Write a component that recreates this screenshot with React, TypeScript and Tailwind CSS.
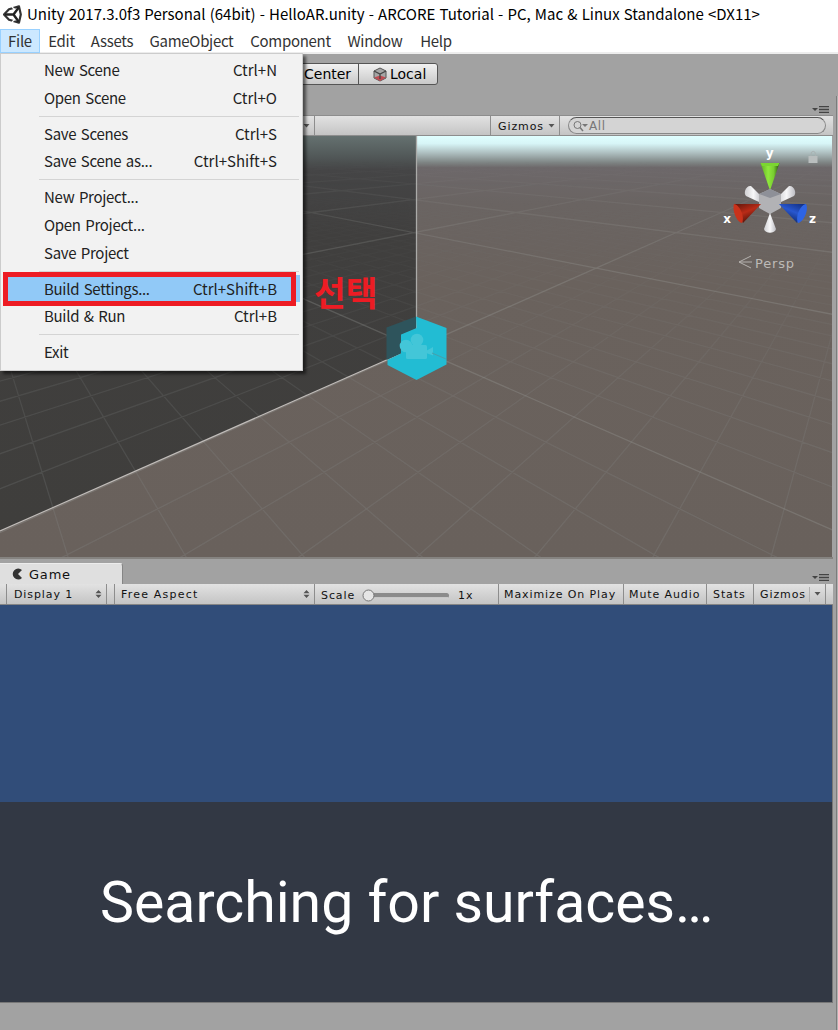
import React from "react";

const MENUS = [
  { label: "File", box: "w-10" },
  { label: "Edit", box: "w-[43px]" },
  { label: "Assets", box: "w-[58px]" },
  { label: "GameObject", box: "w-[101px]" },
  { label: "Component", box: "w-[97px]" },
  { label: "Window", box: "w-[72px]" },
  { label: "Help", box: "w-[50px]" },
];

const GROUPS: [string, string][][] = [
  [["New Scene", "Ctrl+N"], ["Open Scene", "Ctrl+O"]],
  [["Save Scenes", "Ctrl+S"], ["Save Scene as...", "Ctrl+Shift+S"]],
  [["New Project...", ""], ["Open Project...", ""], ["Save Project", ""]],
  [["Build Settings...", "Ctrl+Shift+B"], ["Build & Run", "Ctrl+B"]],
  [["Exit", ""]],
];

const BAR = "bg-linear-to-b from-[#e2e2e2] to-[#c4c4c4]";
const CELL = "flex h-full items-center border-r border-[#8d8d8d] whitespace-nowrap";

function UnityLogo() {
  return (
    <svg className="ml-[3px] h-[19px] w-[19px]" viewBox="0 0 19 19" fill="none">
      <path d="M1 9.5 6 4.2 16 1.4 17.8 9.5 16 17.6 6 14.8Z" stroke="#333" strokeWidth="2.2" strokeLinejoin="round" />
      <path d="M2 9.5H10.5L15.7 2.5M10.5 9.5 15.7 16.8" stroke="#222" strokeWidth="2.4" />
      <path d="M9 2.2 12 4.5M9 16.8 12 14.4" stroke="#fff" strokeWidth="1.3" />
    </svg>
  );
}

function PanelMenu() {
  return (
    <svg className="h-[7px] w-[18px]" viewBox="0 0 18 7">
      <path d="M1 2H7L4 5Z" fill="#444" />
      <path d="M8 .7H18M8 3.5H18M8 6.3H18" stroke="#444" strokeWidth="1.3" />
    </svg>
  );
}

function Caret() {
  return (
    <svg className="h-[4px] w-[7px]" viewBox="0 0 7 4">
      <path d="M.5 0H6.5L3.5 3.6Z" fill="#555" />
    </svg>
  );
}

function UpDown() {
  return (
    <svg className="h-2 w-[7px]" viewBox="0 0 7 8">
      <path d="M.5 3.2H6.5L3.5 0ZM.5 4.8H6.5L3.5 8Z" fill="#555" />
    </svg>
  );
}

function project(k: number, j: number): [number, number] {
  const w = 0.0623;
  const d = 1 - (k + j) * w;
  return [
    (416 + 60 * k * w - 885 * j * w) / d,
    (348 - 140 * (k + j) * w) / d - 136,
  ];
}

function gridPath(major: boolean): string {
  let out = "";
  for (let n = -90; n <= 15; n++) {
    if ((n % 10 === 0) !== major) continue;
    const near = 15.4 - n;
    for (const flip of [false, true]) {
      const a = flip ? project(n, -400) : project(-400, n);
      const b = flip ? project(n, near) : project(near, n);
      out += `M${a[0].toFixed(1)} ${a[1].toFixed(1)}L${b[0].toFixed(1)} ${b[1].toFixed(1)}`;
    }
  }
  return out;
}

function SceneView() {
  return (
    <svg className="block h-[421px] w-[832px]" viewBox="0 0 832 421">
      <defs>
        <linearGradient id="sky" x1="0" y1="0" x2="0" y2="421" gradientUnits="userSpaceOnUse">
          <stop offset="0" stopColor="#e0ffff" />
          <stop offset=".018" stopColor="#d7f5f7" />
          <stop offset=".04" stopColor="#aebfc0" />
          <stop offset=".062" stopColor="#808786" />
          <stop offset=".075" stopColor="#6d686a" />
          <stop offset=".16" stopColor="#6a6462" />
          <stop offset=".35" stopColor="#6a625d" />
          <stop offset="1" stopColor="#69615c" />
        </linearGradient>
        <linearGradient id="shade" x1="0" y1="0" x2="0" y2="395" gradientUnits="userSpaceOnUse">
          <stop offset="0" stopColor="#657170" />
          <stop offset=".05" stopColor="#525959" />
          <stop offset=".085" stopColor="#454546" />
          <stop offset=".25" stopColor="#403f3e" />
          <stop offset="1" stopColor="#3f3e3c" />
        </linearGradient>
        <linearGradient id="minor" x1="0" y1="0" x2="0" y2="421" gradientUnits="userSpaceOnUse">
          <stop offset=".1" stopColor="#fff" stopOpacity="0" />
          <stop offset=".3" stopColor="#fff" stopOpacity=".2" />
          <stop offset=".6" stopColor="#fff" stopOpacity=".75" />
          <stop offset="1" stopColor="#fff" />
        </linearGradient>
        <linearGradient id="major" x1="0" y1="0" x2="0" y2="421" gradientUnits="userSpaceOnUse">
          <stop offset=".06" stopColor="#fff" stopOpacity="0" />
          <stop offset=".2" stopColor="#fff" stopOpacity=".6" />
          <stop offset=".35" stopColor="#fff" />
        </linearGradient>
        <mask id="minorFade" maskUnits="userSpaceOnUse" x="0" y="0" width="832" height="421">
          <rect width="832" height="421" fill="url(#minor)" />
        </mask>
        <mask id="majorFade" maskUnits="userSpaceOnUse" x="0" y="0" width="832" height="421">
          <rect width="832" height="421" fill="url(#major)" />
        </mask>
        <linearGradient id="green" x1="0" x2="1">
          <stop offset="0" stopColor="#5fae22" />
          <stop offset=".4" stopColor="#8fe83c" />
          <stop offset=".7" stopColor="#78cc30" />
          <stop offset="1" stopColor="#234c0c" />
        </linearGradient>
        <linearGradient id="red" x1="0" y1="0" x2=".6" y2="1">
          <stop offset="0" stopColor="#5d150a" />
          <stop offset=".5" stopColor="#b92b17" />
          <stop offset="1" stopColor="#3d1009" />
        </linearGradient>
        <linearGradient id="blue" x1="1" y1="0" x2=".4" y2="1">
          <stop offset="0" stopColor="#102a78" />
          <stop offset=".5" stopColor="#2857cf" />
          <stop offset="1" stopColor="#0e2560" />
        </linearGradient>
        <linearGradient id="white" x1="0" x2="1">
          <stop offset="0" stopColor="#cfcfd2" />
          <stop offset=".5" stopColor="#f7f7f8" />
          <stop offset="1" stopColor="#bcbcc2" />
        </linearGradient>
      </defs>
      <rect width="832" height="421" fill="url(#sky)" />
      <path d="M0 0H416V211L0 395Z" fill="url(#shade)" />
      <path d={gridPath(false)} mask="url(#minorFade)" stroke="#8b9190" strokeOpacity=".22" strokeWidth="1.3" fill="none" />
      <path d={gridPath(true)} mask="url(#majorFade)" stroke="#a2a4a2" strokeOpacity=".28" strokeWidth="1.3" fill="none" />
      <path d="M416.500 0V211" stroke="#aaaaa8" strokeWidth="1.300" />
      <path d="M0 395 416 211" stroke="#c0bcb9" strokeWidth="1.200" />

      <path d="M386.500 191.500 416 180.500V192L401 198.500V217.500L386.500 224Z" fill="#2e545c" />
      <path d="M416 180.500 446.500 192V228.500L416.500 244 387.500 229V224L401 217.500V198.500L416.500 192Z" fill="#22bcd3" />
      <g fill="#43c6d8">
        <circle cx="417" cy="204" r="6.300" />
        <circle cx="406" cy="210" r="6.300" />
        <rect x="406" y="209" width="21" height="14" rx="1.500" />
        <path d="M426 215 433 211V219.500L426 217Z" />
      </g>
      <path d="M432 217 446 223" stroke="#479fab" />

      <g transform="translate(770 65)">
        <path d="M-8-4-19-15C-24-16-27-8-24-5L-11 1Z" fill="url(#white)" />
        <path d="M8-4 19-15C24-16 27-8 24-5L11 1Z" fill="url(#white)" />
        <path d="M-11-7 0-12 11-7V7L0 13-11 7Z" fill="#b2b2b5" />
        <path d="M-11-7 0-12 11-7 0-3Z" fill="#8e9098" />
        <path d="M-9.500-38H9.500L.5-12H-.5Z" fill="url(#green)" />
        <path d="M-9.500-38H9.500L8-35H-8Z" fill="#7bd630" />
        <path d="M0 12-6 28C-5 33 5 33 6 28Z" fill="url(#white)" />
        <path d="M-9 3-36 3-27 22Z" fill="url(#red)" />
        <path d="M-36 3C-30 4-25 16-28 22C-34 21-38 8-36 3Z" fill="#c9321b" />
        <path d="M9 3 36 3 27 22Z" fill="url(#blue)" />
        <path d="M36 3C30 4 25 16 28 22C34 21 39 8 36 3Z" fill="#2e64e4" />
      </g>
      <g fill="#fff" fontFamily="DejaVu Sans" fontWeight="bold" fontSize="12" textAnchor="middle">
        <text x="770" y="21">y</text>
        <text x="727.500" y="87">x</text>
        <text x="813" y="87">z</text>
      </g>
      <rect x="808.500" y="20" width="9" height="7" fill="#b9bebe" />
      <path d="M811 20V18.500A2 2.800 0 0 1 815.500 18.500V20" fill="none" stroke="#a9b2b2" />
      <path d="M751 120 739 126 751 132M739 126H752" stroke="#b4b1ae" fill="none" />
      <text x="755" y="131.500" fontFamily="DejaVu Sans" fontSize="13" fill="#bdbab7" textLength="40">Persp</text>
    </svg>
  );
}

function FileMenu() {
  return (
    <div className="absolute top-[53px] left-0 z-10 h-[318px] w-[303px] border border-[#cccccc] bg-[#f2f2f2] pt-[2.400px] shadow-[3px_3px_3px_rgba(0,0,0,0.55)]">
      {GROUPS.map((group, g) => (
        <div key={g}>
          {g > 0 && (
            <div className="flex h-[8.400px] items-center">
              <div className="mt-px ml-[38px] h-px w-[260px] bg-[#d4d4d4]" />
            </div>
          )}
          {group.map(([label, key]) => (
            <div
              key={label}
              className={`mx-[2px] flex h-[27.600px] items-center justify-between pr-[23px] pl-[41px] text-[15px] leading-5 text-[#222] [word-spacing:1.500px] ${
                label === "Build Settings..." ? "bg-[#91c9f7]" : ""
              }`}
            >
              <span className="tracking-[-0.300px]">{label}</span>
              <span>{key}</span>
            </div>
          ))}
        </div>
      ))}
      <div className="absolute top-[218px] left-[2px] h-[34px] w-[293px] border-[5px] border-[#ed1c24]" />
    </div>
  );
}

export default function App() {
  return (
    <div className="relative flex h-[1030px] w-[838px] flex-col overflow-hidden bg-[#a2a2a2] font-['Noto_Sans_CJK_KR','Noto_Sans',sans-serif] text-black">
      <header className="flex h-7 items-center bg-white">
        <UnityLogo />
        <h1 className="ml-[5px] text-[15px] leading-5 whitespace-nowrap [word-spacing:0.800px]">
          Unity 2017.3.0f3 Personal (64bit) - HelloAR.unity - ARCORE Tutorial - PC, Mac &amp; Linux Standalone &lt;DX11&gt;
        </h1>
      </header>
      <nav className="flex h-[26px] items-start border-b-2 border-[#ededed] bg-white text-[15px] leading-5 tracking-[-0.300px] text-[#333]">
        {MENUS.map((m, i) => (
          <div
            key={m.label}
            className={`flex shrink-0 items-center justify-center ${m.box} ${
              i === 0 ? "mt-px h-6 border border-[#99d1ff] bg-[#cce8ff] pb-px" : "h-[25px]"
            }`}
          >
            {m.label}
          </div>
        ))}
      </nav>

      <div className="flex h-[61px] items-start pt-[9px] pl-[280px] font-['DejaVu_Sans',sans-serif] text-[14px] leading-none">
        <div className="flex h-[22px] w-[158px] rounded-[3px] border border-[#555] bg-linear-to-b from-[#f1f1f1] to-[#c9c9c9]">
          <div className="flex w-[78px] items-center border-r border-[#555] pl-[23px]">Center</div>
          <div className="flex items-center pl-[14px]">
            <svg className="mr-[3px] h-[15px] w-[14px]" viewBox="0 0 14 15">
              <path d="M1 4 7 1 13 4V11L7 14 1 11Z" fill="#a5a5a5" stroke="#555" />
              <path d="M1 10.500 7 8.500 13 10.500 7 14Z" fill="#bf4b52" />
              <path d="M1 4 7 7 13 4M7 7V12" stroke="#444" strokeWidth="1.300" fill="none" />
            </svg>
            Local
          </div>
        </div>
      </div>

      <div className="flex min-h-0 flex-1">
        <main className="w-[833px] shrink-0 font-['DejaVu_Sans',sans-serif] text-[11px] leading-none tracking-[0.900px] text-[#111]">
          <div className="relative">
            <div className="absolute -top-[9px] right-[4px]">
              <PanelMenu />
            </div>
            <div className={`flex h-[21px] items-center border-y border-[#8d8d8d] ${BAR}`}>
              <div className={`${CELL} w-[315px] justify-end pr-[4px]`}>
                <Caret />
              </div>
              <div className={`${CELL} w-[176px]`} />
              <div className={`${CELL} w-[69px] justify-between pr-[4px] pl-[7px]`}>
                <span className="mt-px">Gizmos</span> <Caret />
              </div>
              <div className="ml-[8px] flex h-[17px] w-[258px] items-center rounded-full border border-[#888] border-t-[#555] bg-[#d4d4d4] pl-[4px] text-[12px] tracking-[0.600px] text-[#777]">
                <svg className="mr-px h-3 w-[15px]" viewBox="0 0 15 12">
                  <circle cx="4.500" cy="5" r="3.500" stroke="#777" fill="none" />
                  <path d="M7 7.500 10 11" stroke="#777" strokeWidth="1.500" />
                  <path d="M9 4H15L12 7Z" fill="#777" />
                </svg>
                All
              </div>
            </div>
            <SceneView />
          </div>

          <div className="flex h-[27px] items-end justify-between border-t-2 border-[#858380]">
            <div className="flex h-[21px] w-[123px] items-center rounded-tr-[3px] border-t border-r border-[#858585] border-t-[#ececec] bg-[#dfdfdf] pl-[12px] text-[13px] tracking-[0.800px]">
              <svg className="mr-[6px] h-3 w-[11px]" viewBox="0 0 11 12">
                <path d="M10 2A5.500 5.500 0 1 0 10 10L6 6Z" fill="#333" />
              </svg>
              Game
            </div>
            <div className="mr-[4px] mb-[3px]">
              <PanelMenu />
            </div>
          </div>
          <div className={`flex h-[21px] items-center border-b border-[#858585] ${BAR}`}>
            <div className={`${CELL} w-[7px]`} />
            <div className={`${CELL} w-[100px] justify-between pr-[4px] pl-[7px]`}>
              Display 1 <UpDown />
            </div>
            <div className={`${CELL} w-[8px]`} />
            <div className={`${CELL} w-[200px] justify-between pr-[4px] pl-[6px]`}>
              <span className="tracking-[1.200px]">Free Aspect</span> <UpDown />
            </div>
            <div className={`${CELL} w-[184px] pl-[6px]`}>
              <span className="mt-[2px] w-[41px]">Scale</span>
              <svg className="mt-[3px] h-[13px] w-[88px]" viewBox="0 0 88 13">
                <rect x="6" y="4" width="81" height="5" rx="2.500" fill="#8b8b8b" />
                <path d="M12 8.500H86" stroke="#c7c7c7" />
                <circle cx="6.500" cy="6.500" r="5.500" fill="#e5e5e5" stroke="#777" />
              </svg>
              <span className="mt-[2px] ml-[8px]">1x</span>
            </div>
            <div className={`${CELL} w-[125px] pl-[5px]`}>Maximize On Play</div>
            <div className={`${CELL} w-[83px] pl-[5px]`}>Mute Audio</div>
            <div className={`${CELL} w-[47px] pl-[6px]`}>Stats</div>
            <div className={`${CELL} w-[72px] justify-between pr-[4px] pl-[6px]`}>
              Gizmos
              <span className="flex h-[15px] items-center border-l border-[#b0b0b0] pl-[4px]">
                <Caret />
              </span>
            </div>
          </div>
          <section className="flex h-[398px] flex-col border-r border-b border-[#777] bg-[#314d79]">
            <div className="h-[197px]" />
            <div className="flex flex-1 items-center bg-[#323844] pt-[2px] pl-[100px] font-['Roboto',sans-serif] text-[57.200px] tracking-normal text-white">
              <span className="whitespace-nowrap">Searching for surfaces…</span>
            </div>
          </section>
        </main>
        <aside className="-mt-[19px] ml-[3px] w-[2px] border-l border-[#7c7c7c] bg-[#b2b2b2]" />
      </div>

      <FileMenu />
      <div className="absolute top-[272px] left-[314px] font-['Noto_Sans_CJK_KR',sans-serif] text-[34.500px] leading-[38px] font-bold text-[#ed1c24]">
        선택
      </div>
    </div>
  );
}
